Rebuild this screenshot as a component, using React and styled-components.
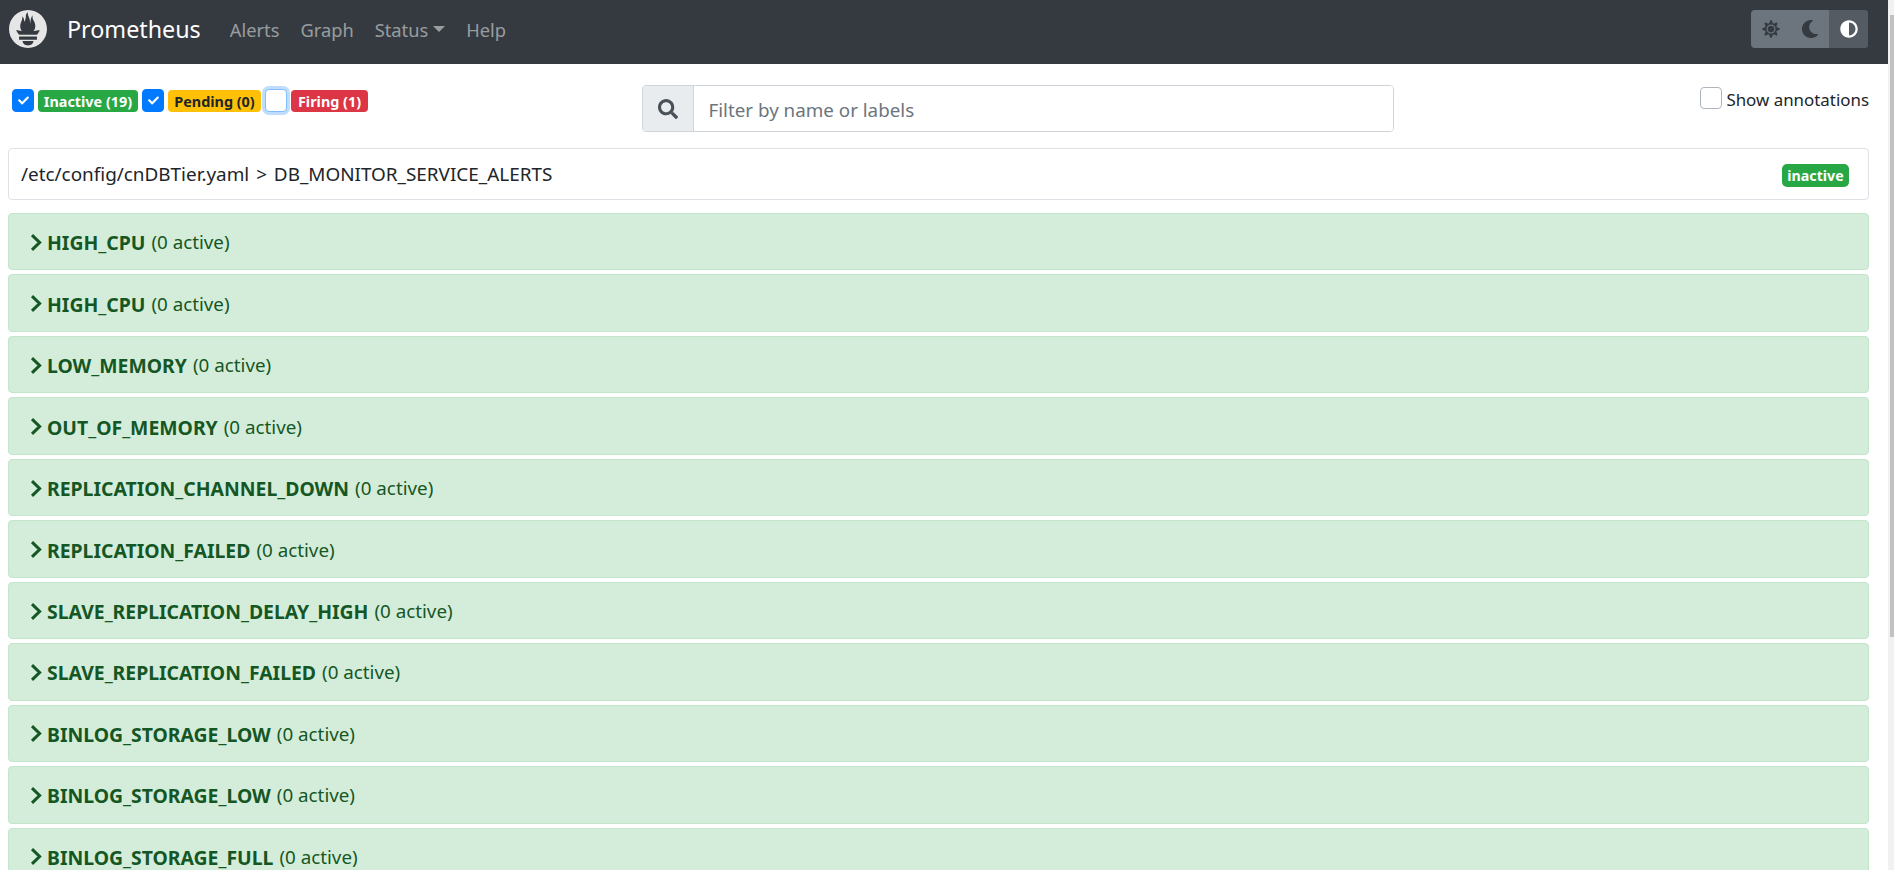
import React from 'react';
import styled, { createGlobalStyle } from 'styled-components';
import { SiPrometheus } from 'react-icons/si';
import { FaSun, FaMoon, FaAdjust, FaSearch, FaCheck } from 'react-icons/fa';

const GlobalStyle = createGlobalStyle`
  html, body {
    margin: 0;
    height: 100%;
    overflow: hidden;
    background: #fff;
  }
  body {
    font-family: "Noto Sans", "Open Sans", sans-serif;
    font-size: 19px;
    line-height: 27px;
    color: #212529;
  }
  * {
    box-sizing: border-box;
  }
`;

const Page = styled.div`
  width: 1888px;
  height: 870px;
  overflow: hidden;
`;

const Navbar = styled.nav`
  height: 64px;
  background: #343a40;
  display: flex;
  align-items: center;
  padding: 0 20px 6px 9px;
`;

const Logo = styled(SiPrometheus)`
  width: 38px;
  height: 38px;
  color: #e6e6e6;
  margin-right: 20px;
`;

const Brand = styled.a`
  color: #fff;
  font-size: 23.3px;
  margin-right: 18.5px;
`;

const NavLink = styled.a`
  color: rgba(255, 255, 255, 0.5);
  font-size: 18.3px;
  padding: 0 10.5px;
  display: flex;
  align-items: center;
`;

const Caret = styled.span`
  width: 0;
  height: 0;
  margin-left: 5px;
  border-top: 6px solid rgba(255, 255, 255, 0.5);
  border-left: 6px solid transparent;
  border-right: 6px solid transparent;
`;

const ThemeGroup = styled.div`
  margin-left: auto;
  display: flex;
  height: 38px;
  border-radius: 4px;
  overflow: hidden;
  background: #6c757d;
`;

const ThemeButton = styled.button`
  width: 39px;
  border: 0;
  padding: 0;
  display: flex;
  align-items: center;
  justify-content: center;
  font-size: 18px;
  color: ${({ $active }) => ($active ? '#fff' : '#343a40')};
  background: ${({ $active }) => ($active ? '#545b62' : 'transparent')};
`;

const Content = styled.main`
  padding: 0 19px 0 8px;
`;

const FilterRow = styled.div`
  height: 84px;
  display: grid;
  grid-template-columns: 633.5px 752.5px 1fr;
`;

const Filters = styled.div`
  display: flex;
  align-items: flex-start;
  gap: 4px;
  padding: 25px 0 0 4px;
`;

const Check = styled.span`
  width: 22px;
  height: 23px;
  flex: none;
  border-radius: 4px;
  display: flex;
  align-items: center;
  justify-content: center;
  color: #fff;
  font-size: 11px;
  background: ${({ $on }) => ($on ? '#007bff' : '#fff')};
  border: 1px solid ${({ $on }) => ($on ? '#007bff' : '#80bdff')};
  box-shadow: ${({ $focus }) => ($focus ? '0 0 0 3px rgba(0, 123, 255, 0.25)' : 'none')};
`;

const Badge = styled.span`
  width: ${({ $width }) => $width}px;
  height: 22px;
  flex: none;
  margin-top: 1px;
  border-radius: 4px;
  font-size: 14.4px;
  line-height: 24px;
  font-weight: 700;
  text-align: center;
  white-space: nowrap;
  color: ${({ $color }) => ($color === '#ffc107' ? '#212529' : '#fff')};
  background: ${({ $color }) => $color};
`;

const SearchGroup = styled.div`
  margin-top: 21px;
  height: 47px;
  display: flex;
  border: 1px solid #ced4da;
  border-radius: 4px;
  overflow: hidden;
`;

const SearchAddon = styled.span`
  width: 51px;
  display: flex;
  align-items: center;
  justify-content: center;
  background: #e9ecef;
  border-right: 1px solid #ced4da;
  color: #495057;
  font-size: 20px;
`;

const SearchInput = styled.input`
  flex: 1;
  min-width: 0;
  border: 0;
  outline: 0;
  padding: 4px 15px 0;
  font: inherit;
  font-size: 18.8px;
  color: #495057;

  &::placeholder {
    color: #6c757d;
    opacity: 1;
  }
`;

const Annotations = styled.label`
  display: flex;
  align-items: flex-start;
  justify-content: flex-end;
  padding: 22px 0 0;
  font-size: 16.9px;
  white-space: nowrap;
`;

const AnnotationBox = styled.span`
  width: 22px;
  height: 22px;
  margin: 1px 4px 0 0;
  border: 1px solid #adb5bd;
  border-radius: 4px;
  background: #fff;
`;

const GroupCard = styled.section`
  height: 52px;
  margin-bottom: 13px;
  padding: 0 19px 0 12px;
  border: 1px solid #dee2e6;
  border-radius: 4px;
  display: flex;
  align-items: center;
  justify-content: space-between;
  font-size: 18.9px;
  word-spacing: 2px;
`;

const StateBadge = styled.span`
  width: 67px;
  height: 23px;
  margin-top: 2px;
  border-radius: 5px;
  background: #28a745;
  color: #fff;
  font-size: 14.2px;
  line-height: 23px;
  font-weight: 700;
  text-align: center;
`;

const AlertRow = styled.div`
  height: 57.2px;
  margin-bottom: 4.3px;
  padding: 2px 21px 0;
  display: flex;
  align-items: center;
  background: #d4edda;
  border: 1px solid #c3e6cb;
  border-radius: 4px;
  color: #155724;
  font-size: 18.8px;
`;

const ChevronIcon = styled.svg`
  width: 12px;
  height: 17px;
  margin: -1px 5px 0 0;
  flex: none;
`;

const AlertName = styled.strong`
  font-size: 19.4px;
  font-weight: 700;
  margin-right: 6px;
`;

const Scrollbar = styled.div`
  position: fixed;
  top: 0;
  right: 0;
  width: 6px;
  height: 100%;
  background: #f1f1f1;

  &::before {
    content: '';
    position: absolute;
    top: 15px;
    left: 2px;
    right: 0;
    height: 622px;
    background: #c1c1c1;
  }
`;

const alerts = [
  'HIGH_CPU',
  'HIGH_CPU',
  'LOW_MEMORY',
  'OUT_OF_MEMORY',
  'REPLICATION_CHANNEL_DOWN',
  'REPLICATION_FAILED',
  'SLAVE_REPLICATION_DELAY_HIGH',
  'SLAVE_REPLICATION_FAILED',
  'BINLOG_STORAGE_LOW',
  'BINLOG_STORAGE_LOW',
  'BINLOG_STORAGE_FULL',
];

function Chevron() {
  return (
    <ChevronIcon viewBox="0 0 12 17">
      <path d="M2 1.2 L9.6 8.5 L2 15.8" fill="none" stroke="currentColor" strokeWidth="3" />
    </ChevronIcon>
  );
}

export default function App() {
  return (
    <Page>
      <GlobalStyle />
      <Navbar>
        <Logo />
        <Brand>Prometheus</Brand>
        <NavLink>Alerts</NavLink>
        <NavLink>Graph</NavLink>
        <NavLink>
          Status
          <Caret />
        </NavLink>
        <NavLink>Help</NavLink>
        <ThemeGroup>
          <ThemeButton><FaSun /></ThemeButton>
          <ThemeButton><FaMoon /></ThemeButton>
          <ThemeButton $active><FaAdjust /></ThemeButton>
        </ThemeGroup>
      </Navbar>
      <Content>
        <FilterRow>
          <Filters>
            <Check $on><FaCheck /></Check>
            <Badge $color="#28a745" $width={100}>Inactive (19)</Badge>
            <Check $on><FaCheck /></Check>
            <Badge $color="#ffc107" $width={93}>Pending (0)</Badge>
            <Check $focus />
            <Badge $color="#dc3545" $width={77}>Firing (1)</Badge>
          </Filters>
          <SearchGroup>
            <SearchAddon><FaSearch /></SearchAddon>
            <SearchInput placeholder="Filter by name or labels" />
          </SearchGroup>
          <Annotations>
            <AnnotationBox />
            Show annotations
          </Annotations>
        </FilterRow>
        <GroupCard>
          <span>/etc/config/cnDBTier.yaml &gt; DB_MONITOR_SERVICE_ALERTS</span>
          <StateBadge>inactive</StateBadge>
        </GroupCard>
        {alerts.map((name, i) => (
          <AlertRow key={i}>
            <Chevron />
            <AlertName>{name}</AlertName>
            (0 active)
          </AlertRow>
        ))}
      </Content>
      <Scrollbar />
    </Page>
  );
}
